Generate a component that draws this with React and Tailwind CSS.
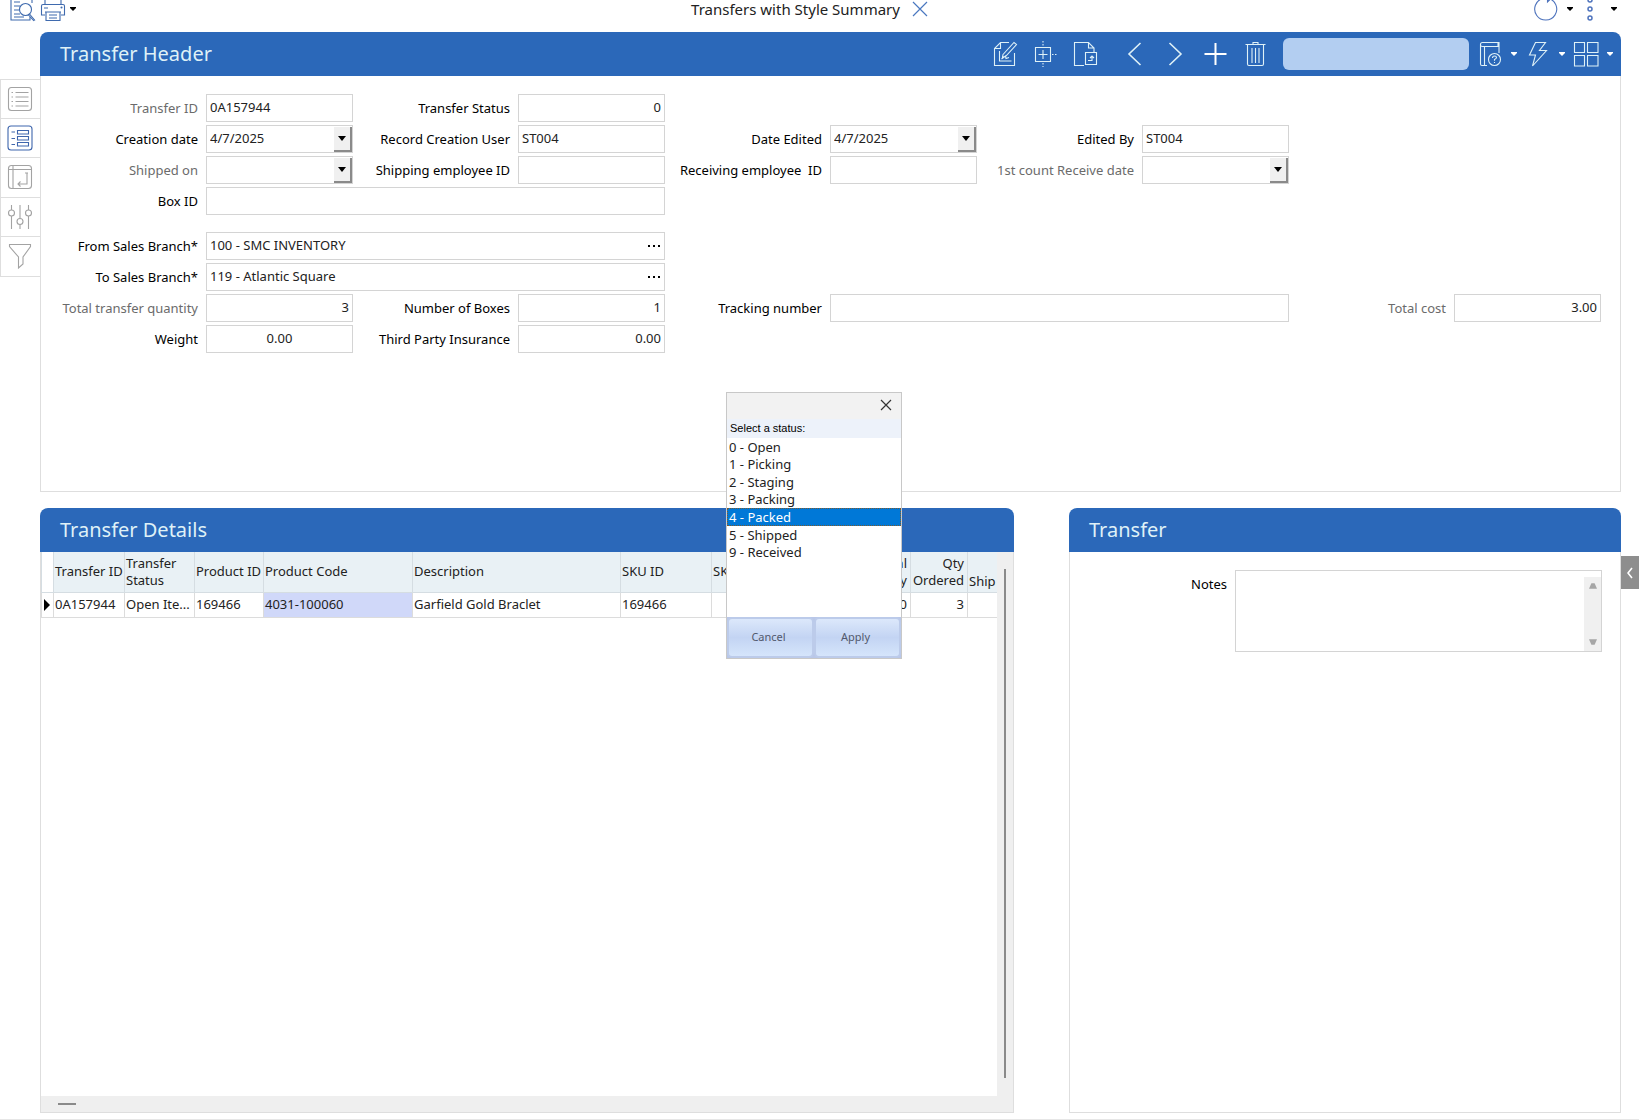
import React, { useState } from 'react';

const Svg = ({ className = 'w-[26px] h-[26px]', children }) => (
  <svg
    viewBox="0 0 26 26"
    fill="none"
    stroke="currentColor"
    strokeWidth="1.1"
    className={`shrink-0 ${className}`}
    aria-hidden="true"
  >
    {children}
  </svg>
);

const Caret = () => (
  <svg viewBox="0 0 6 4" className="w-[6px] h-[4px] shrink-0" fill="currentColor" aria-hidden="true">
    <path d="M0 0h6v1L3 4 0 1z" />
  </svg>
);

const PreviewIcon = () => (
  <Svg>
    <path d="M22 7V1H1v23h19v-3M4 6h6M4 10h6M4 14h5M4 18h6M4 21h10" />
    <circle cx="15.5" cy="13.5" r="6" />
    <path d="M19.5 18l5.500 6.500M18.500 19l5.500 6" />
  </Svg>
);

const PrintIcon = () => (
  <Svg>
    <path d="M5 8V1h16v7M5 19H1.500V10q0-1.500 1.500-1.500h20q1.500 0 1.500 1.500v9H21M4 12h4" />
    <path d="M5 16h16M6 16v8.500h14V16M9 19h8M9 22h8" />
    <circle cx="21.500" cy="11.500" r=".5" />
  </Svg>
);

const RefreshIcon = () => (
  <Svg>
    <path d="M15 2.300A11 11 0 1 1 10 2.400" />
    <path d="M14.500 6V2h4z" fill="currentColor" />
  </Svg>
);

const DotsIcon = () => (
  <Svg>
    <g strokeWidth="1.500">
      <circle cx="13" cy="4" r="2" />
      <circle cx="13" cy="13" r="2" />
      <circle cx="13" cy="22" r="2" />
    </g>
  </Svg>
);

const EditIcon = () => (
  <Svg>
    <path d="M17 1.500H8.500L2.500 7.500v17h20V12M8.500 1.500v6h-6" />
    <path d="M11 13.500l11-12 2.500 2-11 12-3 .5zM7.500 10v10h12M9.500 18l4-3 .500 2.500 3-1" />
  </Svg>
);

const InsertIcon = () => (
  <Svg>
    <path d="M3.500 6.500h15v14h-15zM11 9v9M6.500 13.500h9" />
    <path d="M11 0v5M11 22v4M20 13.500h6" strokeDasharray="1.500 1.500" />
  </Svg>
);

const ExportIcon = () => (
  <Svg>
    <path d="M12 24.500H2.500v-23h14l5.500 5.500V11M16.500 1.500V7H22" />
    <path d="M13.500 11.500h11v12h-11zM16 19.500h4v-4M18 17l2-2 2 2" />
  </Svg>
);

const PrevIcon = () => (
  <Svg><path d="M18.500 2L7 13l11.500 11" strokeWidth="1.600" /></Svg>
);

const NextIcon = () => (
  <Svg><path d="M7.500 2L19 13 7.500 24" strokeWidth="1.600" /></Svg>
);

const AddIcon = () => (
  <Svg><path d="M13.500 2v22M2.500 13h22" strokeWidth="2" stroke="#fff" /></Svg>
);

const TrashIcon = () => (
  <Svg>
    <path d="M3.500 3.500h20M11 3.500v-2h5v2M5.500 3.500v19.500q0 1.500 1.500 1.500h13q1.500 0 1.500-1.500v-19.500M10 7v15M13.500 7v15M17 7v15" />
  </Svg>
);

const HelpBookIcon = () => (
  <Svg>
    <path d="M10 24.500H5q-1.500 0-1.500-1.500V3.500q0-2 2-2H22v4M3.500 4q0 1.500 2 1.500H22V12M7.500 6v18.500M21 1.500v4" />
    <circle cx="17.500" cy="18.500" r="6" />
    <path d="M15.500 17q0-2 2-2t2 1.500q0 1-2 2v1.200M17.500 21v1" />
  </Svg>
);

const BoltIcon = () => (
  <Svg><path d="M10.500 1.500L4.500 14h6L7.500 25 21.500 9.500h-7L20.500 1.500z" /></Svg>
);

const TilesIcon = () => (
  <Svg><path d="M1.500 1.500h10v10h-10zM14.500 1.500h10.500v10H14.500zM1.500 14.500h10V25h-10zM14.500 14.500h10.500V25H14.500z" /></Svg>
);

const ListIcon = () => (
  <Svg>
    <rect x="1.500" y="1.500" width="23" height="23" rx="3" />
    <path d="M8.500 6.500h13M8.500 11h13M8.500 15.500h13M8.500 20h13M4.500 6.500h1.500M4.500 11h1.500M4.500 15.500h1.500M4.500 20h1.500" />
  </Svg>
);

const FormIcon = () => (
  <Svg>
    <rect x="1" y="1" width="24" height="24" rx="3" />
    <path d="M10.500 5.500h11v3.500h-11zM10.500 11.500h11v3.500h-11zM10.500 17.500h11V21h-11zM4.500 7H8M4.500 13.500H8M4.500 19.500H8" />
  </Svg>
);

const LayoutIcon = () => (
  <Svg>
    <rect x="1.500" y="1.500" width="23" height="23" rx="3" />
    <path d="M1.500 5.500h23M6 1.500v23M20 9v11h-9M13.500 17.500L11 20l2.500 2.500M18 9h3" />
  </Svg>
);

const SlidersIcon = () => (
  <Svg>
    <path d="M4.500 1v5M4.500 12v13M13 1v13.500M13 20.500V25M21.500 1v5M21.500 12v13" />
    <circle cx="4.500" cy="9" r="3" />
    <circle cx="13" cy="17.500" r="3" />
    <circle cx="21.500" cy="9" r="3" />
  </Svg>
);

const FunnelIcon = () => (
  <Svg><path d="M2.500 1.500h21v2L16 14v7l-4.500 4V14L2.500 3.500z" /></Svg>
);

const MenuButton = ({ label, icon, width = 'w-12', caretClass = 'text-white' }) => (
  <button type="button" aria-label={label} className={`flex h-full items-center gap-2 ${width}`}>
    {icon}
    <span className={caretClass}><Caret /></span>
  </button>
);

const IconButton = ({ label, children }) => (
  <button type="button" aria-label={label} className="flex h-full w-10 items-center justify-center">
    {children}
  </button>
);

const PanelBar = ({ title, children }) => (
  <header className="flex h-11 shrink-0 items-center rounded-t-lg bg-[#2b68b9] pl-5 text-[#dff1f7]">
    <h2 className="flex-1 text-xl">{title}</h2>
    {children}
  </header>
);

const Field = ({ id, label, value = '', muted, align = 'text-left', kind, span = '' }) => (
  <div className={`flex h-7 items-center ${span}`}>
    <label
      htmlFor={id}
      className={`w-[165px] shrink-0 whitespace-pre pt-[2px] pr-2 text-right ${muted ? 'text-[#6b6b6b]' : 'text-black'}`}
    >
      {label}
    </label>
    <div className="flex h-full min-w-0 flex-1 border border-[#d4d4d4] bg-white">
      <input
        id={id}
        type="text"
        defaultValue={value}
        className={`h-full w-full min-w-0 px-[3px] pb-[2px] text-[#222] outline-none ${align}`}
      />
      {kind === 'date' && (
        <button
          type="button"
          aria-label={`Open ${label} calendar`}
          className="mt-px flex w-[18px] shrink-0 items-center justify-center border-r-2 border-b-2 border-[#8a8a8a] bg-[#f0f0f0] text-black"
        >
          <svg viewBox="0 0 8 5" className="h-[5px] w-2" fill="currentColor" aria-hidden="true">
            <path d="M0 0h8L4 5z" />
          </svg>
        </button>
      )}
      {kind === 'lookup' && (
        <button type="button" aria-label={`Look up ${label}`} className="flex w-5 shrink-0 items-center justify-center">
          <svg viewBox="0 0 12 2" className="h-[2px] w-3" fill="#000" aria-hidden="true">
            <path d="M0 0h2v2H0zM5 0h2v2H5zM10 0h2v2h-2z" />
          </svg>
        </button>
      )}
    </div>
  </div>
);

const sideItems = [
  { label: 'List view', icon: <ListIcon /> },
  { label: 'Form view', icon: <FormIcon />, active: true },
  { label: 'Layout', icon: <LayoutIcon /> },
  { label: 'Settings', icon: <SlidersIcon /> },
  { label: 'Filter', icon: <FunnelIcon /> },
];

const statuses = [
  '0 - Open',
  '1 - Picking',
  '2 - Staging',
  '3 - Packing',
  '4 - Packed',
  '5 - Shipped',
  '9 - Received',
];

const TopBar = () => (
  <div className="flex h-8 items-start justify-between pl-[10px] pr-[18px]">
    <div className="-mt-1 flex flex-1 items-center text-[#3f6aae]">
      <button type="button" aria-label="Print preview" className="w-[30px]"><PreviewIcon /></button>
      <MenuButton label="Print" icon={<PrintIcon />} caretClass="-ml-1 text-black" />
    </div>
    <div className="flex items-center gap-3 pr-3">
      <h1 className="text-[15px] leading-[18px] text-[#222]">Transfers with Style Summary</h1>
      <button type="button" aria-label="Close tab" className="text-[#4a78c0]">
        <svg viewBox="0 0 16 16" className="h-4 w-4" stroke="currentColor" strokeWidth="1.2" aria-hidden="true">
          <path d="M1 1l14 14M15 1L1 15" />
        </svg>
      </button>
    </div>
    <div className="-mt-1 flex flex-1 items-center justify-end text-[#4f74bd]">
      <MenuButton label="Refresh" icon={<RefreshIcon />} width="w-11" caretClass="text-black" />
      <MenuButton label="More" icon={<DotsIcon />} width="w-11" caretClass="text-black" />
    </div>
  </div>
);

const StatusDialog = () => {
  const [selected, setSelected] = useState('4 - Packed');

  return (
    <div
      role="dialog"
      aria-labelledby="status-title"
      className="absolute left-[726px] top-[392px] flex w-[176px] flex-col border border-[#c8c8c8] bg-white"
    >
      <div className="flex h-[26px] items-start justify-end bg-[#f2f2f2] pt-[2px] pr-[5px]">
        <button type="button" aria-label="Close" className="p-1">
          <svg viewBox="0 0 12 12" className="h-3 w-3" stroke="#333" strokeWidth="1.2" aria-hidden="true">
            <path d="M1 1l10 10M11 1L1 11" />
          </svg>
        </button>
      </div>
      <p id="status-title" className="h-[19px] bg-[#edf2fa] pl-[3px] font-['Liberation_Sans'] text-[11px] leading-[18px] text-black">
        Select a status:
      </p>
      <ul role="listbox" aria-labelledby="status-title" className="mb-[56px] grid h-[123px] grid-rows-7">
        {statuses.map((s) => (
          <li
            key={s}
            role="option"
            aria-selected={s === selected}
            onClick={() => setSelected(s)}
            className={`flex items-center pl-[2px] leading-4 ${
              s === selected
                ? 'bg-[#0078d7] text-white outline-1 -outline-offset-1 outline-dotted outline-[#7a5a30]'
                : 'text-[#222]'
            }`}
          >
            {s}
          </li>
        ))}
      </ul>
      <div className="grid grid-cols-2 bg-[#b9c7e8]">
        {['Cancel', 'Apply'].map((name) => (
          <button
            key={name}
            type="button"
            className="h-[41px] rounded-[5px] border-2 border-[#bccbea] bg-linear-to-b from-[#dce8fb] via-[#c3d4f3] to-[#d5e5fb] pr-1 text-[11px] text-[#51586c]"
          >
            {name}
          </button>
        ))}
      </div>
    </div>
  );
};

const TransferHeader = () => (
  <section className="flex min-h-[460px] flex-col">
    <PanelBar title="Transfer Header">
      <IconButton label="Edit"><EditIcon /></IconButton>
      <IconButton label="Insert"><InsertIcon /></IconButton>
      <IconButton label="Export"><ExportIcon /></IconButton>
      <div className="ml-[10px] flex h-full">
        <IconButton label="Previous"><PrevIcon /></IconButton>
        <IconButton label="Next"><NextIcon /></IconButton>
        <IconButton label="Add"><AddIcon /></IconButton>
        <IconButton label="Delete"><TrashIcon /></IconButton>
      </div>
      <input
        type="search"
        aria-label="Search"
        className="mx-2 h-8 w-[186px] rounded-md bg-[#b3cef1] px-2 text-sm text-black outline-none"
      />
      <MenuButton label="Help" icon={<HelpBookIcon />} />
      <MenuButton label="Actions" icon={<BoltIcon />} />
      <MenuButton label="Tiles" icon={<TilesIcon />} />
    </PanelBar>

    <form className="flex flex-1 flex-col gap-[17px] border border-t-0 border-[#dedede] pr-[19px] pt-[18px]">
      <div className="grid grid-cols-5 gap-y-[3px]">
        <Field id="transfer-id" label="Transfer ID" value="0A157944" muted />
        <Field id="transfer-status" label="Transfer Status" value="0" align="text-right" />
        <Field id="creation-date" label="Creation date" value="4/7/2025" kind="date" span="col-start-1" />
        <Field id="creation-user" label="Record Creation User" value="ST004" />
        <Field id="date-edited" label="Date Edited" value="4/7/2025" kind="date" />
        <Field id="edited-by" label="Edited By" value="ST004" />
        <Field id="shipped-on" label="Shipped on" kind="date" muted span="col-start-1" />
        <Field id="shipping-employee" label="Shipping employee ID" />
        <Field id="receiving-employee" label="Receiving employee  ID" />
        <Field id="receive-date" label="1st count Receive date" kind="date" muted />
        <Field id="box-id" label="Box ID" span="col-start-1 col-span-2" />
      </div>
      <div className="grid grid-cols-5 gap-y-[3px]">
        <Field id="from-branch" label="From Sales Branch*" value="100 - SMC INVENTORY" kind="lookup" span="col-span-2" />
        <Field id="to-branch" label="To Sales Branch*" value="119 - Atlantic Square" kind="lookup" span="col-start-1 col-span-2" />
        <Field id="total-qty" label="Total transfer quantity" value="3" align="text-right" muted span="col-start-1" />
        <Field id="boxes" label="Number of Boxes" value="1" align="text-right" />
        <Field id="tracking" label="Tracking number" span="col-span-2" />
        <Field id="total-cost" label="Total cost" value="3.00" align="text-right" muted />
        <Field id="weight" label="Weight" value="0.00" align="text-center" />
        <Field id="insurance" label="Third Party Insurance" value="0.00" align="text-right" />
      </div>
    </form>
  </section>
);

const TransferDetails = () => (
  <section className="flex min-w-0 flex-col">
    <PanelBar title="Transfer Details" />
    <div className="flex flex-1 flex-col border border-t-0 border-[#dedede]">
      <div className="flex flex-1">
        <div className="min-w-0 flex-1 overflow-hidden">
          <table className="w-full table-fixed border-collapse text-left leading-[17px] text-[#222]">
            <colgroup>
              <col className="w-[12px]" />
              <col className="w-[71px]" />
              <col className="w-[70px]" />
              <col className="w-[69px]" />
              <col className="w-[149px]" />
              <col className="w-[208px]" />
              <col className="w-[91px]" />
              <col className="w-[119px]" />
              <col className="w-[80px]" />
              <col className="w-[57px]" />
              <col className="w-[30px]" />
            </colgroup>
            <thead>
              <tr className="h-10 bg-[#e9f1f5] *:overflow-hidden *:border *:border-t-0 *:border-[#d5dde2] *:pl-px *:font-normal *:whitespace-nowrap">
                <th aria-label="Current row" className="bg-white" />
                <th>Transfer ID</th>
                <th>Transfer<br />Status</th>
                <th>Product ID</th>
                <th>Product Code</th>
                <th>Description</th>
                <th>SKU ID</th>
                <th>SKU</th>
                <th className="pr-[3px] text-right">Total<br />Qty</th>
                <th className="pr-[3px] text-right">Qty<br />Ordered</th>
                <th className="border-r-0! pb-[2px] align-bottom">Ship</th>
              </tr>
            </thead>
            <tbody>
              <tr className="h-[25px] *:overflow-hidden *:border *:border-[#dcdcdc] *:pl-px *:whitespace-nowrap">
                <td>
                  <svg viewBox="0 0 6 12" className="ml-px h-3 w-[6px]" aria-hidden="true"><path d="M0 0l6 6-6 6z" /></svg>
                </td>
                <td>0A157944</td>
                <td>Open Ite...</td>
                <td>169466</td>
                <td className="bg-[#d0d8f9]">4031-100060</td>
                <td>Garfield Gold Braclet</td>
                <td>169466</td>
                <td />
                <td className="pr-[3px] text-right">0</td>
                <td className="pr-[3px] text-right">3</td>
                <td className="border-r-0!" />
              </tr>
            </tbody>
          </table>
        </div>
        <div className="flex w-4 justify-center bg-[#efefef] pt-[17px] pb-[18px]">
          <div className="w-[2px] bg-[#8a8a8a]" />
        </div>
      </div>
      <div className="flex h-4 items-center bg-[#efefef] pl-[17px]">
        <div className="h-[2px] w-[18px] bg-[#8a8a8a]" />
      </div>
    </div>
  </section>
);

const TransferNotes = () => (
  <section className="flex min-w-0 flex-col">
    <PanelBar title="Transfer" />
    <div className="flex flex-1 items-start border border-t-0 border-[#dedede] pr-[18px] pt-[18px]">
      <label htmlFor="notes" className="w-[165px] shrink-0 pt-[5px] pr-2 text-right text-black">Notes</label>
      <div className="flex h-[82px] flex-1 border border-[#d4d4d4]">
        <textarea id="notes" className="h-full w-full resize-none p-1 outline-none" />
        <div className="mt-[6px] flex w-[17px] shrink-0 flex-col items-center justify-between bg-[#f0f0f0] py-[6px]">
          <svg viewBox="0 0 10 7" className="h-[6px] w-2" fill="#a6a6a6" aria-hidden="true"><path d="M3 0h4l3 7H0z" /></svg>
          <svg viewBox="0 0 10 7" className="h-[6px] w-2" fill="#a6a6a6" aria-hidden="true"><path d="M0 0h10L7 7H3z" /></svg>
        </div>
      </div>
    </div>
  </section>
);

const App = () => {
  return (
    <div className="relative flex min-h-screen flex-col overflow-hidden border-b border-[#e6e6e6] bg-white font-['Noto_Sans','Open_Sans',sans-serif] text-[13px]">
      <TopBar />
      <div className="flex flex-1 pb-[6px] pr-[18px]">
        <nav className="mt-[47px] grid h-[198px] w-10 shrink-0 grid-rows-5 divide-y divide-[#dedede] border-y border-l border-[#dedede]">
          {sideItems.map((item) => (
            <button
              key={item.label}
              type="button"
              aria-label={item.label}
              className={`flex items-center justify-center pr-[2px] ${item.active ? 'text-[#3f66ad]' : 'text-[#a3a3a3]'}`}
            >
              {item.icon}
            </button>
          ))}
        </nav>
        <main className="flex min-w-0 flex-1 flex-col gap-4">
          <TransferHeader />
          <div className="grid flex-1 grid-cols-[minmax(0,974fr)_minmax(0,552fr)] gap-[55px]">
            <TransferDetails />
            <TransferNotes />
          </div>
        </main>
      </div>

      <button
        type="button"
        aria-label="Expand side panel"
        className="absolute right-0 top-[556px] flex h-[33px] w-[18px] items-center justify-center bg-[#8e8e8e]"
      >
        <svg viewBox="0 0 6 12" className="h-3 w-[6px]" fill="none" stroke="#fff" strokeWidth="1.6" aria-hidden="true">
          <path d="M5 1L1 6l4 5" />
        </svg>
      </button>

      <StatusDialog />
    </div>
  );
};

export default App;
